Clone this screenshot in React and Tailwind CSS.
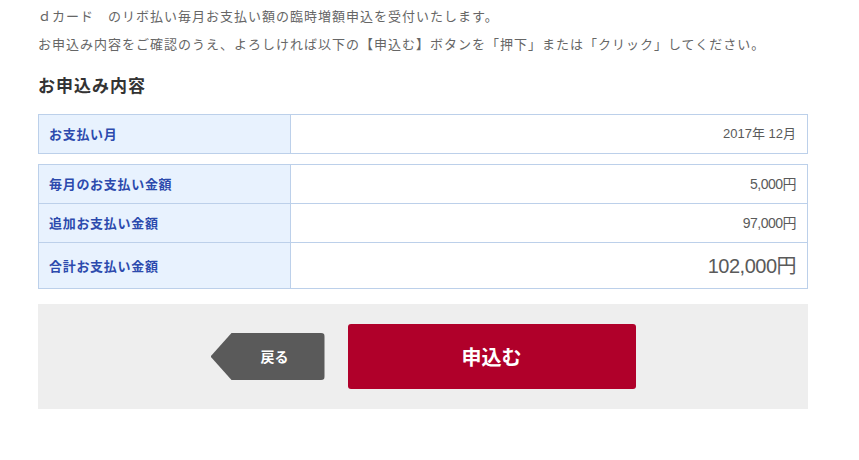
const FONT = { fontFamily: '"Noto Sans CJK JP", "Noto Sans", sans-serif' }
const NUM = { fontFamily: '"Liberation Sans", "Noto Sans CJK JP", sans-serif' }

const ROWS = [
  { label: '毎月のお支払い金額', value: '5,000円' },
  { label: '追加お支払い金額', value: '97,000円' },
  { label: '合計お支払い金額', value: '102,000円', total: true },
]

function Row({ label, value, total, last }) {
  return (
    <div className={`flex ${total ? 'h-[45px]' : 'h-[39px]'} ${last ? '' : 'border-b border-[#bcd0ea]'}`}>
      <div className="flex w-[252px] shrink-0 items-center border-r border-[#bcd0ea] bg-[#e8f2fe] pl-[10px] text-[13px] font-bold tracking-[0.7px] text-[#2c4aad]">
        {label}
      </div>
      <div
        style={NUM}
        className={`flex flex-1 items-center justify-end pr-[11px] tracking-[-0.5px] text-[#5a5a5a] ${total ? 'text-[20px]' : 'text-[14px]'}`}
      >
        {value}
      </div>
    </div>
  )
}

export default function App() {
  return (
    <div style={FONT} className="min-h-[460px] bg-white">
      <div className="ml-[38px] w-[770px] pt-[2px]">
        <p className="text-[13px] leading-[28px] tracking-[1px] text-[#666]">
          ｄカード　のリボ払い毎月お支払い額の臨時増額申込を受付いたします。
        </p>
        <p className="text-[13px] leading-[28px] tracking-[1px] text-[#666]">
          お申込み内容をご確認のうえ、よろしければ以下の【申込む】ボタンを「押下」または「クリック」してください。
        </p>
        <h2 className="mt-[14px] text-[17px] font-bold leading-[26px] tracking-[1px] text-[#333]">お申込み内容</h2>

        <div className="mt-[16px] border border-[#bcd0ea]">
          <div className="flex h-[38px]">
            <div className="flex w-[252px] shrink-0 items-center border-r border-[#bcd0ea] bg-[#e8f2fe] pl-[10px] text-[13px] font-bold tracking-[0.7px] text-[#2c4aad]">
              お支払い月
            </div>
            <div style={NUM} className="flex flex-1 items-center justify-end pr-[11px] text-[13px] text-[#5a5a5a]">
              2017年 12月
            </div>
          </div>
        </div>

        <div className="mt-[10px] border border-[#bcd0ea]">
          {ROWS.map((r, i) => (
            <Row key={r.label} {...r} last={i === ROWS.length - 1} />
          ))}
        </div>

        <div className="mt-[15px] flex h-[105px] items-center justify-center gap-[23px] bg-[#eeeeee]">
          <button className="flex h-[47px] w-[114px] items-center justify-center rounded-r-[4px] bg-[#5a5a5a] pl-[14px] text-[14px] font-bold text-white [clip-path:polygon(21px_0,100%_0,100%_100%,21px_100%,0_50%)]">
            戻る
          </button>
          <button className="flex h-[65px] w-[288px] items-center justify-center rounded-[3px] bg-[#b0002a] text-[20px] font-bold text-white">
            申込む
          </button>
        </div>
      </div>
    </div>
  )
}
